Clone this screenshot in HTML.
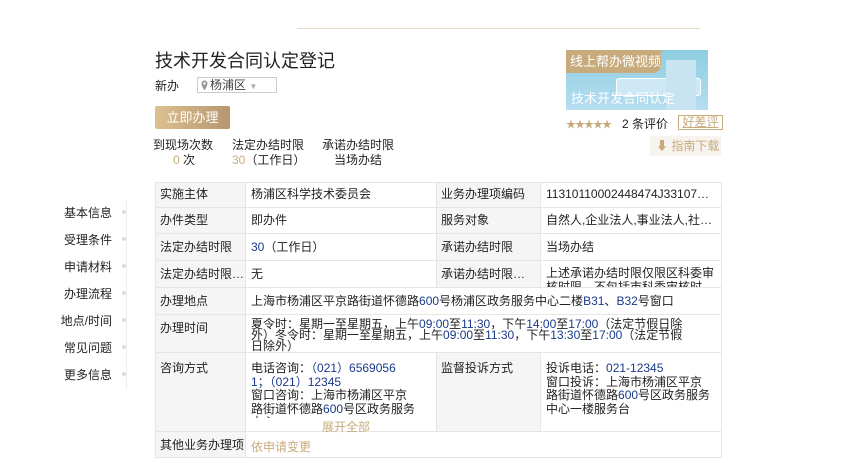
<!DOCTYPE html>
<html><head><meta charset="utf-8"><style>
*{margin:0;padding:0;box-sizing:border-box}
body{width:856px;height:463px;background:#fff;font-family:"Liberation Sans","Noto Sans CJK SC",sans-serif;font-size:12px;color:#222;position:relative;overflow:hidden}
.a{position:absolute;white-space:nowrap}
.c{position:absolute;border-right:1px solid #e6e6e6;border-bottom:1px solid #e6e6e6;padding:4px 5px;line-height:14px;overflow:hidden;white-space:nowrap}
.l{background:#f5f5f5;padding-left:4px}
.b{color:#1a3a8a}
.g{color:#c8ab7c}
.nav{position:absolute;right:744px;font-size:12px;color:#222}
.dot{position:absolute;left:122px;width:4px;height:4px;border-radius:2px;background:#ddd}
</style></head><body>
<div class="a" style="left:297px;top:28px;width:403px;height:1px;background:#e8dcc6"></div>
<div class="a" style="left:155px;top:47px;font-size:18px;color:#222">技术开发合同认定登记</div>
<div class="a" style="left:155px;top:77px;">新办</div>
<div class="a" style="left:197px;top:77px;width:80px;height:16px;border:1px solid #ccc;padding-left:12px;line-height:14px;color:#444">杨浦区 <span style="color:#aaa;font-size:8px">▼</span>
<svg style="position:absolute;left:3px;top:2px" width="7" height="11" viewBox="0 0 7 11"><path d="M3.5 0.5a3 3 0 0 0-3 3c0 2.5 3 7 3 7s3-4.5 3-7a3 3 0 0 0-3-3z" fill="#999"/><circle cx="3.5" cy="3.5" r="1.2" fill="#fff"/></svg></div>
<div class="a" style="left:155px;top:106px;width:75px;height:23px;border-radius:2px;background:linear-gradient(90deg,#dcc090,#b89670);color:#fff;font-size:13px;line-height:23px;text-align:center">立即办理</div>
<div class="a" style="left:153px;top:138px;line-height:15px">到现场次数</div>
<div class="a" style="left:173px;top:153px;line-height:15px"><span class="g">0</span> 次</div>
<div class="a" style="left:232px;top:138px;line-height:15px">法定办结时限</div>
<div class="a" style="left:232px;top:153px;line-height:15px"><span class="g">30</span>（工作日）</div>
<div class="a" style="left:322px;top:138px;line-height:15px">承诺办结时限</div>
<div class="a" style="left:334px;top:153px;line-height:15px">当场办结</div>
<div class="a" style="left:566px;top:50px;width:142px;height:60px;background:linear-gradient(180deg,#8dcde0,#b6def0);overflow:hidden">
<div class="a" style="left:50px;top:28px;width:85px;height:18px;border:1px solid #fff;border-radius:3px;background:#cfe8f5"></div>
<div class="a" style="left:100px;top:10px;width:30px;height:50px;background:#c8e4f2"></div>
<div class="a" style="left:0;top:0;width:95px;height:23px;background:#c8ab7c;border-radius:0 0 8px 0;color:#fff;font-size:13px;line-height:23px;padding-left:4px">线上帮办微视频</div>
<div class="a" style="left:5px;top:38px;color:#fff;font-size:13px">技术开发合同认定</div>
</div>
<div class="a" style="left:566px;top:116px;color:#c8ab7c;font-size:10px;letter-spacing:-1px">★★★★★</div>
<div class="a" style="left:622px;top:115px">2 条评价</div>
<div class="a" style="left:678px;top:115px;width:45px;height:15px;border:1px solid #c8ab7c;color:#c8ab7c;line-height:13px;text-align:center;text-decoration:underline">好差评</div>
<div class="a" style="left:650px;top:136px;width:71px;height:20px;background:#f7f3ee;color:#c8ab7c;line-height:20px;padding-left:6px">⬇ 指南下载</div>
<div class="a" style="left:126px;top:200px;width:1px;height:190px;background:#eee"></div>
<div class="nav" style="top:204px">基本信息</div><div class="dot" style="top:210px"></div>
<div class="nav" style="top:231px">受理条件</div><div class="dot" style="top:237px"></div>
<div class="nav" style="top:258px">申请材料</div><div class="dot" style="top:264px"></div>
<div class="nav" style="top:285px">办理流程</div><div class="dot" style="top:291px"></div>
<div class="nav" style="top:312px">地点/时间</div><div class="dot" style="top:318px"></div>
<div class="nav" style="top:339px">常见问题</div><div class="dot" style="top:345px"></div>
<div class="nav" style="top:366px">更多信息</div><div class="dot" style="top:372px"></div>
<div class="a" style="left:155px;top:182px;width:567px;height:277px;border-top:1px solid #e6e6e6;border-left:1px solid #e6e6e6"></div>
<div class="c l" style="left:155px;top:183px;width:91px;height:25px;border-left:1px solid #e6e6e6">实施主体</div>
<div class="c" style="left:246px;top:183px;width:191px;height:25px">杨浦区科学技术委员会</div>
<div class="c l" style="left:437px;top:183px;width:104px;height:25px">业务办理项编码</div>
<div class="c" style="left:541px;top:183px;width:181px;height:25px">11310110002448474J33107…</div>
<div class="c l" style="left:155px;top:208px;width:91px;height:26px;border-left:1px solid #e6e6e6;padding-top:5px">办件类型</div>
<div class="c" style="left:246px;top:208px;width:191px;height:26px;padding-top:5px">即办件</div>
<div class="c l" style="left:437px;top:208px;width:104px;height:26px;padding-top:5px">服务对象</div>
<div class="c" style="left:541px;top:208px;width:181px;height:26px;padding-top:5px">自然人,企业法人,事业法人,社…</div>
<div class="c l" style="left:155px;top:234px;width:91px;height:27px;border-left:1px solid #e6e6e6;padding-top:6px">法定办结时限</div>
<div class="c" style="left:246px;top:234px;width:191px;height:27px;padding-top:6px"><span class="b">30</span>（工作日）</div>
<div class="c l" style="left:437px;top:234px;width:104px;height:27px;padding-top:6px">承诺办结时限</div>
<div class="c" style="left:541px;top:234px;width:181px;height:27px;padding-top:6px">当场办结</div>
<div class="c l" style="left:155px;top:261px;width:91px;height:27px;border-left:1px solid #e6e6e6;padding-top:6px">法定办结时限…</div>
<div class="c" style="left:246px;top:261px;width:191px;height:27px;padding-top:6px">无</div>
<div class="c l" style="left:437px;top:261px;width:104px;height:27px;padding-top:6px">承诺办结时限…</div>
<div class="c" style="left:541px;top:261px;width:181px;height:27px;padding-top:5px">上述承诺办结时限仅限区科委审<br>核时限，不包括市科委审核时</div>
<div class="c l" style="left:155px;top:288px;width:91px;height:27px;border-left:1px solid #e6e6e6;padding-top:6px">办理地点</div>
<div class="c" style="left:246px;top:288px;width:476px;height:27px;padding-top:6px">上海市杨浦区平京路街道怀德路<span class="b">600</span>号杨浦区政务服务中心二楼<span class="b">B31</span>、<span class="b">B32</span>号窗口</div>
<div class="c l" style="left:155px;top:315px;width:91px;height:38px;border-left:1px solid #e6e6e6;padding-top:6px">办理时间</div>
<div class="c" style="left:246px;top:315px;width:476px;height:38px;line-height:11px;padding:4px 5px 0 5px">夏令时：星期一至星期五，上午<span class="b">09:00</span>至<span class="b">11:30</span>，下午<span class="b">14:00</span>至<span class="b">17:00</span>（法定节假日除<br>外）冬令时：星期一至星期五，上午<span class="b">09:00</span>至<span class="b">11:30</span>，下午<span class="b">13:30</span>至<span class="b">17:00</span>（法定节假<br>日除外）</div>
<div class="c l" style="left:155px;top:353px;width:91px;height:79px;border-left:1px solid #e6e6e6;padding-top:8px">咨询方式</div>
<div class="c" style="left:246px;top:353px;width:191px;height:79px;padding:9px 5px 0 5px;line-height:13.5px">电话咨询：<span class="b">（021）6569056</span><br><span class="b">1；（021）12345</span><br>窗口咨询：上海市杨浦区平京<br>路街道怀德路<span class="b">600</span>号区政务服务<br>中心</div>
<div class="a" style="left:247px;top:418px;width:189px;height:13px;background:#fff"></div>
<div class="a g" style="left:322px;top:418px">展开全部</div>
<div class="c l" style="left:437px;top:353px;width:104px;height:79px;padding-top:8px">监督投诉方式</div>
<div class="c" style="left:541px;top:353px;width:181px;height:79px;padding:9px 5px 0 5px;line-height:13.5px">投诉电话：<span class="b">021-12345</span><br>窗口投诉：上海市杨浦区平京<br>路街道怀德路<span class="b">600</span>号区政务服务<br>中心一楼服务台</div>
<div class="c l" style="left:155px;top:432px;width:91px;height:26px;border-left:1px solid #e6e6e6;padding-top:6px">其他业务办理项</div>
<div class="c" style="left:246px;top:432px;width:476px;height:26px;padding-top:8px;color:#c8ab7c">依申请变更</div>
</body></html>
